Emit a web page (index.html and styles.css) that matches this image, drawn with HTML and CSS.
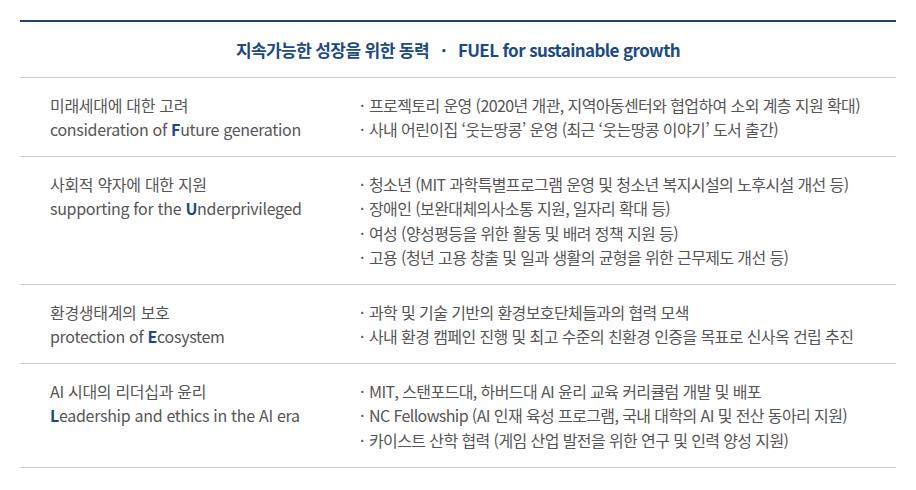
FILE: index.html
```html
<!DOCTYPE html>
<html lang="ko">
<head>
<meta charset="utf-8">
<link rel="stylesheet" href="styles.css">
</head>
<body>
<section class="fuel">
  <h2 class="fuel-title">지속가능한 성장을 위한 동력 <span class="dot">·</span> FUEL for sustainable growth</h2>
  <div class="row">
    <div class="label">
      <p>미래세대에 대한 고려</p>
      <p>consideration of <b>F</b>uture generation</p>
    </div>
    <ul class="items">
      <li>프로젝토리 운영 (2020년 개관, 지역아동센터와 협업하여 소외 계층 지원 확대)</li>
      <li>사내 어린이집 ‘웃는땅콩’ 운영 (최근 ‘웃는땅콩 이야기’ 도서 출간)</li>
    </ul>
  </div>
  <div class="row">
    <div class="label">
      <p>사회적 약자에 대한 지원</p>
      <p>supporting for the <b>U</b>nderprivileged</p>
    </div>
    <ul class="items">
      <li>청소년 (MIT 과학특별프로그램 운영 및 청소년 복지시설의 노후시설 개선 등)</li>
      <li>장애인 (보완대체의사소통 지원, 일자리 확대 등)</li>
      <li>여성 (양성평등을 위한 활동 및 배려 정책 지원 등)</li>
      <li>고용 (청년 고용 창출 및 일과 생활의 균형을 위한 근무제도 개선 등)</li>
    </ul>
  </div>
  <div class="row">
    <div class="label">
      <p>환경생태계의 보호</p>
      <p>protection of <b>E</b>cosystem</p>
    </div>
    <ul class="items">
      <li>과학 및 기술 기반의 환경보호단체들과의 협력 모색</li>
      <li>사내 환경 캠페인 진행 및 최고 수준의 친환경 인증을 목표로 신사옥 건립 추진</li>
    </ul>
  </div>
  <div class="row">
    <div class="label">
      <p>AI 시대의 리더십과 윤리</p>
      <p><b>L</b>eadership and ethics in the AI era</p>
    </div>
    <ul class="items">
      <li>MIT, 스탠포드대, 하버드대 AI 윤리 교육 커리큘럼 개발 및 배포</li>
      <li>NC Fellowship (AI 인재 육성 프로그램, 국내 대학의 AI 및 전산 동아리 지원)</li>
      <li>카이스트 산학 협력 (게임 산업 발전을 위한 연구 및 인력 양성 지원)</li>
    </ul>
  </div>
</section>
</body>
</html>
```

FILE: styles.css
```css
* { box-sizing: border-box; }
html, body { margin: 0; padding: 0; background: #fff; }
body {
  font-family: "Noto Sans CJK KR", "Noto Sans", sans-serif;
  color: #555;
  padding: 20px 20px 0;
}
.fuel {
  border-top: 2px solid #1d4373;
}
.fuel-title {
  margin: 0;
  height: 56px;
  display: flex;
  align-items: center;
  justify-content: center;
  font-size: 17px;
  font-weight: 700;
  color: #1b4a86;
  letter-spacing: -0.6px;
  border-bottom: 1px solid #cfcfcf;
}
.fuel-title .dot { margin: 0 12px; }
.row {
  display: grid;
  grid-template-columns: 310px 1fr;
  padding: 14.5px 0 14.5px 30px;
  border-bottom: 1px solid #cfcfcf;
  font-size: 16px;
  line-height: 24.5px;
  letter-spacing: -0.6px;
}
.label { letter-spacing: -0.3px; }
.label p { margin: 0; }
.label b { color: #1b4a86; font-weight: 700; }
.items { list-style: none; margin: 0; padding: 0; }
.items li { position: relative; padding-left: 9px; }
.items li::before {
  content: "·";
  position: absolute;
  left: 0;
  top: 0;
}
```
